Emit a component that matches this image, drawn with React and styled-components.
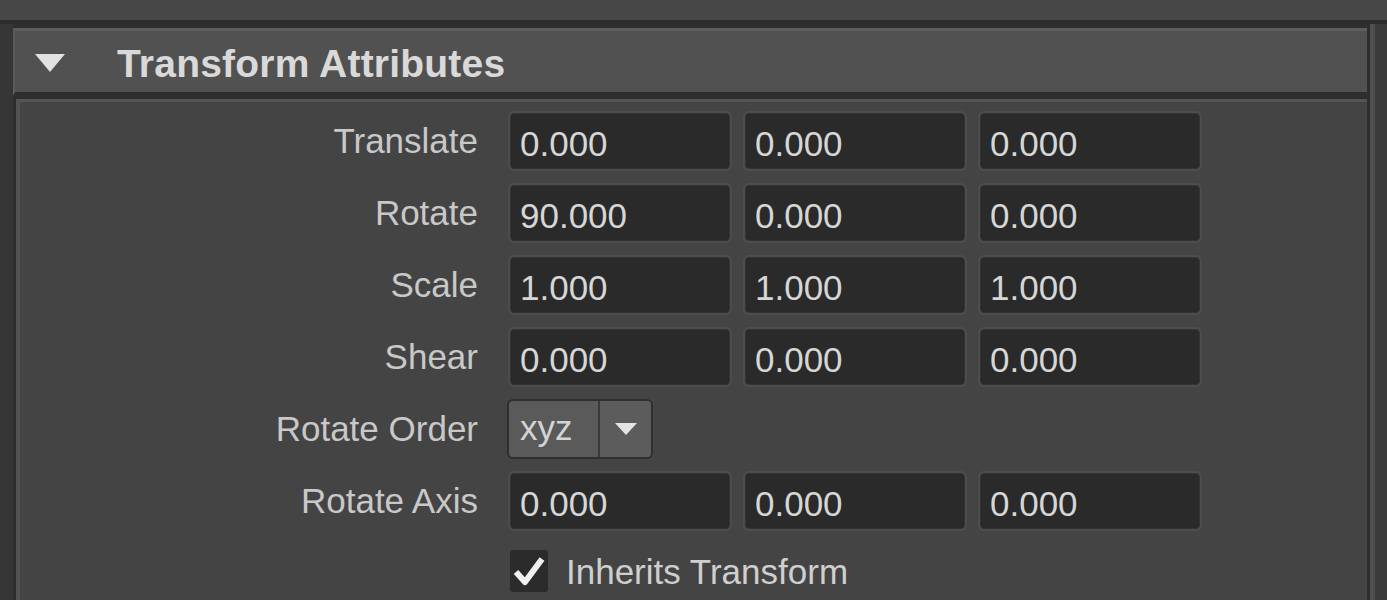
import React, { useState } from 'react';
import styled, { createGlobalStyle } from 'styled-components';

const GlobalStyle = createGlobalStyle`
  html, body {
    margin: 0;
    padding: 0;
    background: #454545;
  }
  body {
    font-family: 'Liberation Sans', Arial, sans-serif;
  }
`;

const Page = styled.div`
  width: 1387px;
  height: 600px;
  overflow: hidden;
  background: #474747;
  display: flex;
  flex-direction: column;
`;

const TopStrip = styled.div`
  height: 20px;
  flex: none;
  background: #474747;
  border-bottom: 4px solid #2c2c2c;
`;

const Frame = styled.div`
  flex: 1;
  display: flex;
  background: #3a3a3a;
`;

const Gutter = styled.div`
  width: ${(p) => p.w}px;
  flex: none;
  background: ${(p) => p.bg};
`;

const Main = styled.div`
  flex: 1;
  display: flex;
  flex-direction: column;
  background: #2e2e2e;
  border-right: 5px solid #4f4f4f;
`;

const Header = styled.div`
  height: 61px;
  flex: none;
  display: flex;
  align-items: center;
  margin-top: 4px;
  margin-right: 3px;
  background: #515151;
  border-top: 3px solid #5d5d5d;
  border-left: 2px solid #5a5a5a;
  border-bottom: 4px solid #2e2e2e;
`;

const Arrow = styled.svg`
  width: 30px;
  height: 18px;
  margin-left: 20px;
  margin-right: 52px;
  margin-top: 2px;
`;

const Title = styled.span`
  font-weight: 700;
  font-size: 39px;
  color: #d9d9d9;
  letter-spacing: 0.2px;
  margin-top: 4px;
`;

const Content = styled.div`
  flex: 1;
  margin-top: 3px;
  margin-left: 3px;
  margin-right: 3px;
  background: #444444;
  border-top: 3px solid #555555;
  border-left: 4px solid #525252;
  padding-top: 3px;
  display: flex;
  flex-direction: column;
`;

const Row = styled.div`
  height: 72px;
  flex: none;
  display: flex;
  align-items: center;
`;

const Label = styled.div`
  width: 490px;
  flex: none;
  box-sizing: border-box;
  padding-right: 32px;
  text-align: right;
  font-size: 35px;
  color: #c8c8c8;
`;

const Fields = styled.div`
  display: flex;
  gap: 15px;
`;

const Field = styled.div`
  width: 220px;
  height: 56px;
  box-sizing: border-box;
  background: #2a2a2a;
  border: 1px solid #333;
  border-radius: 4px;
  box-shadow: 0 0 0 2px #4d4d4d;
  display: flex;
  align-items: center;
  padding-left: 9px;
  padding-top: 6px;
  font-size: 35px;
  color: #d6d6d6;
`;

const Dropdown = styled.div`
  margin-left: -3px;
  width: 146px;
  height: 60px;
  box-sizing: border-box;
  display: flex;
  background: #5a5a5a;
  border: 2px solid #2f2f2f;
  border-radius: 6px;
  overflow: hidden;
`;

const DropValue = styled.div`
  width: 91px;
  display: flex;
  align-items: center;
  padding-left: 11px;
  box-sizing: border-box;
  font-size: 35px;
  color: #d4d4d4;
  border-right: 2px solid #3a3a3a;
  margin-top: -2px;
`;

const DropButton = styled.div`
  flex: 1;
  display: flex;
  align-items: center;
  justify-content: center;
  background: #5c5c5c;
`;

const CheckRow = styled.label`
  display: flex;
  align-items: center;
  gap: 18px;
  cursor: pointer;
  margin-top: -4px;
`;

const Box = styled.div`
  width: 38px;
  height: 42px;
  background: #2b2b2b;
  border-radius: 3px;
  display: flex;
  align-items: center;
  justify-content: center;
`;

const CheckText = styled.span`
  font-size: 35px;
  color: #cfcfcf;
  margin-top: 2px;
`;

const rows = [
  { label: 'Translate', values: ['0.000', '0.000', '0.000'] },
  { label: 'Rotate', values: ['90.000', '0.000', '0.000'] },
  { label: 'Scale', values: ['1.000', '1.000', '1.000'] },
  { label: 'Shear', values: ['0.000', '0.000', '0.000'] },
];

export default function App() {
  const [inherits, setInherits] = useState(true);

  return (
    <Page>
      <GlobalStyle />
      <TopStrip />
      <Frame>
        <Gutter w={13} bg="#363636" />
        <Main>
          <Header>
            <Arrow viewBox="0 0 30 18">
              <polygon points="0,0 30,0 15,18" fill="#e2e2e2" />
            </Arrow>
            <Title>Transform Attributes</Title>
          </Header>
          <Content>
            {rows.map((r) => (
              <Row key={r.label}>
                <Label>{r.label}</Label>
                <Fields>
                  {r.values.map((v, i) => (
                    <Field key={i}>{v}</Field>
                  ))}
                </Fields>
              </Row>
            ))}
            <Row>
              <Label>Rotate Order</Label>
              <Dropdown>
                <DropValue>xyz</DropValue>
                <DropButton>
                  <svg width="22" height="12" viewBox="0 0 22 12">
                    <polygon points="0,0 22,0 11,12" fill="#e4e4e4" />
                  </svg>
                </DropButton>
              </Dropdown>
            </Row>
            <Row>
              <Label>Rotate Axis</Label>
              <Fields>
                <Field>0.000</Field>
                <Field>0.000</Field>
                <Field>0.000</Field>
              </Fields>
            </Row>
            <Row>
              <Label />
              <CheckRow onClick={() => setInherits(!inherits)}>
                <Box>
                  {inherits && (
                    <svg width="34" height="34" viewBox="0 0 34 34">
                      <path d="M4 18 L13 28 L30 5" fill="none" stroke="#f0f0f0" strokeWidth="6" strokeLinejoin="round" />
                    </svg>
                  )}
                </Box>
                <CheckText>Inherits Transform</CheckText>
              </CheckRow>
            </Row>
          </Content>
        </Main>
        <Gutter w={12} bg="#3b3b3b" />
      </Frame>
    </Page>
  );
}
